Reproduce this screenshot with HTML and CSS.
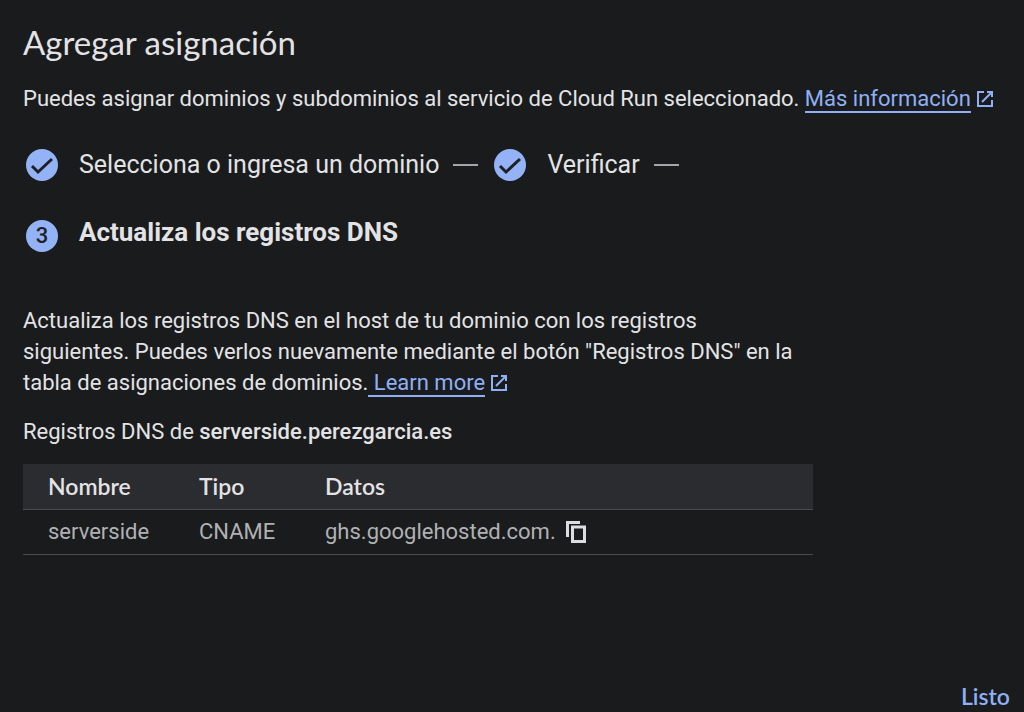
FILE: index.html
```html
<!DOCTYPE html>
<html lang="es">
    <head>
        <meta charset="utf-8">
        <meta name="viewport" content="width=device-width, initial-scale=1">
        <title>Agregar asignación</title>
        <link rel="stylesheet" href="styles.css">
    </head>
    <body>
        <main class="panel">
            <h1 class="title">Agregar asignación</h1>
            <p class="intro">Puedes asignar dominios y subdominios al servicio de Cloud Run seleccionado. <a class="link" href="#">Más información</a><svg class="external" viewBox="0 0 18 18" aria-hidden="true"><path d="M8 2H2v14h14v-6M11 2h5v5M16 2L6 12"/></svg></p>

            <ol class="steps">
                <li class="step">
                    <svg class="badge" viewBox="0 0 32 32" aria-hidden="true"><circle cx="16" cy="16" r="16"/><path d="M6 17l6 6L26 10"/></svg>
                    <span>Selecciona o ingresa un dominio</span>
                    <span class="dash"></span>
                </li>
                <li class="step">
                    <svg class="badge" viewBox="0 0 32 32" aria-hidden="true"><circle cx="16" cy="16" r="16"/><path d="M6 17l6 6L26 10"/></svg>
                    <span>Verificar</span>
                    <span class="dash"></span>
                </li>
                <li class="step current">
                    <span class="number">3</span>
                    <span>Actualiza los registros DNS</span>
                </li>
            </ol>

            <section class="content">
                <p class="help">Actualiza los registros DNS en el host de tu dominio con los registros siguientes. Puedes verlos nuevamente mediante el botón "Registros DNS" en la tabla de asignaciones de dominios.<a class="link" href="#"> Learn more</a><svg class="external" viewBox="0 0 18 18" aria-hidden="true"><path d="M8 2H2v14h14v-6M11 2h5v5M16 2L6 12"/></svg></p>
                <p class="domain">Registros DNS de <strong>serverside.perezgarcia.es</strong></p>
                <table class="records">
                    <thead>
                        <tr>
                            <th class="name">Nombre</th>
                            <th class="type">Tipo</th>
                            <th>Datos</th>
                        </tr>
                    </thead>
                    <tbody>
                        <tr>
                            <td>serverside</td>
                            <td>CNAME</td>
                            <td>
                                <div class="data">
                                    <span>ghs.googlehosted.com.</span>
                                    <button class="copy" type="button" aria-label="Copiar">
                                        <svg viewBox="0 0 20 22" aria-hidden="true"><path d="M1.500 16V1.500H14M6.500 6h12v14.500h-12z"/></svg>
                                    </button>
                                </div>
                            </td>
                        </tr>
                    </tbody>
                </table>
            </section>

            <footer class="actions">
                <button class="done" type="button">Listo</button>
            </footer>
        </main>
    </body>
</html>
```
FILE: styles.css
```css
* {
    box-sizing: border-box;
}
body {
    margin: 0;
    background-color: #1a1b1c;
    color: #e3e3e6;
    font-family: Roboto, "Liberation Sans", sans-serif;
    font-size: 22px;
    line-height: 31px;
}
.panel {
    display: flex;
    flex-direction: column;
    min-height: 100vh;
    padding: 22px 14px 0 23px;
}
.title {
    margin: 0;
    font-family: Lato, sans-serif;
    font-size: 33px;
    font-weight: 400;
    line-height: 40px;
}
p {
    margin: 0;
}
.intro {
    margin-top: 21px;
}
.link {
    color: #8fb0f5;
    text-decoration: none;
    border-bottom: 2px solid #8fb0f5;
}
.external {
    width: 18px;
    height: 18px;
    margin-left: 5px;
    vertical-align: -2px;
    fill: none;
    stroke: #8fb0f5;
    stroke-width: 2;
}
/* pasos */
.steps {
    display: flex;
    flex-wrap: wrap;
    column-gap: 16px;
    row-gap: 39px;
    margin: 35px 0 0;
    padding: 0 3px;
    list-style: none;
    font-size: 25px;
    line-height: 32px;
}
.step {
    display: flex;
    align-items: center;
}
.badge {
    width: 32px;
    height: 32px;
    margin-right: 21px;
    fill: #94b3f6;
}
.badge path {
    fill: none;
    stroke: #1f2023;
    stroke-width: 3;
}
.dash {
    width: 25px;
    height: 2px;
    margin-left: 14px;
    background-color: #a5a6a9;
}
.current {
    align-items: flex-start;
    width: 100%;
    font-size: 26px;
    font-weight: 700;
    line-height: 25px;
}
.number {
    width: 32px;
    height: 32px;
    margin-right: 21px;
    border-radius: 50%;
    background-color: #94b3f6;
    color: #1f2023;
    font-size: 22px;
    font-weight: 500;
    line-height: 32px;
    text-align: center;
}
/* registros */
.content {
    max-width: 790px;
    margin-top: 53px;
}
.help {
    max-width: 780px;
}
.domain {
    margin-top: 18px;
}
strong {
    font-weight: 500;
}
.records {
    width: 100%;
    margin-top: 17px;
    border-collapse: collapse;
    table-layout: fixed;
    color: #b0b1b4;
}
.records th,
.records td {
    height: 45px;
    padding: 0 0 0 25px;
    border-bottom: 1px solid #4a4b4e;
    text-align: left;
}
.records th {
    background-color: #2b2c2f;
    color: #e3e3e6;
    font-family: Lato, sans-serif;
    font-size: 23px;
    font-weight: 600;
}
.name {
    width: 151px;
}
.type {
    width: 126px;
}
.data {
    display: flex;
    align-items: center;
    gap: 10px;
}
button {
    padding: 0;
    border: 0;
    background: none;
    cursor: pointer;
}
.copy svg {
    display: block;
    width: 20px;
    height: 22px;
    fill: none;
    stroke: #dcdde0;
    stroke-width: 3;
}
.actions {
    display: flex;
    justify-content: flex-end;
    margin-top: auto;
}
.done {
    color: #8fb0f5;
    font-family: Lato, sans-serif;
    font-size: 23px;
    font-weight: 600;
    line-height: 31px;
}
```
